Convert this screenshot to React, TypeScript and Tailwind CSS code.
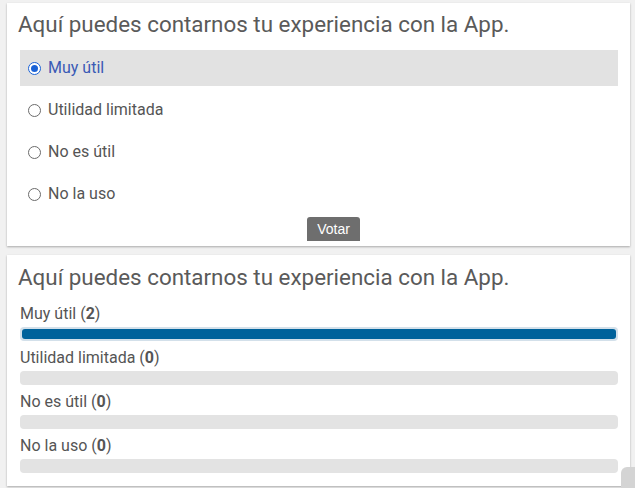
import React from "react";

const options = ["Muy útil", "Utilidad limitada", "No es útil", "No la uso"];
const results = [
  { label: "Muy útil", count: 2 },
  { label: "Utilidad limitada", count: 0 },
  { label: "No es útil", count: 0 },
  { label: "No la uso", count: 0 },
];

const Radio = ({ checked }: { checked: boolean }) =>
  checked ? (
    <span className="flex h-[13px] w-[13px] items-center justify-center rounded-full border-[1.5px] border-[#1a62d6] bg-white">
      <span className="h-[7px] w-[7px] rounded-full bg-[#1a62d6]" />
    </span>
  ) : (
    <span className="h-[13px] w-[13px] rounded-full border border-[#6b6b6b] bg-white" />
  );

const App = () => {
  const total = results.reduce((s, r) => s + r.count, 0);

  return (
    <div
      className="relative min-h-[488px] overflow-hidden bg-[#f1f1f1] pt-[3px]"
      style={{ fontFamily: "Roboto, 'Liberation Sans', sans-serif" }}
    >
      {/* poll form */}
      <div className="ml-[7px] mr-[5px] h-[243px] bg-white shadow-[0_1px_2px_rgba(0,0,0,0.3)]">
        <h2 className="pl-[11px] pt-[6px] text-[22.4px] leading-[30px] text-[#5a5a5a]">
          Aquí puedes contarnos tu experiencia con la App.
        </h2>
        <div className="mt-[11px] flex flex-col gap-[6px] pl-[13px] pr-[12px]">
          {options.map((opt, i) => (
            <label
              key={opt}
              className={`flex h-[36px] items-center pl-[8px] text-[16px] ${
                i === 0 ? "bg-[#e2e2e2] text-[#3a5ab5]" : "text-[#555555]"
              }`}
            >
              <Radio checked={i === 0} />
              <span className="ml-[7px]">{opt}</span>
            </label>
          ))}
        </div>
        <button
          className="ml-[300px] mt-[5px] h-[24px] w-[53px] rounded-t-[3px] bg-[#6e6e6e] text-[14px] text-white"
          style={{ fontFamily: "'Liberation Sans', Arial, sans-serif" }}
        >
          Votar
        </button>
      </div>

      {/* results */}
      <div className="ml-[7px] mr-[5px] mt-[9px] h-[231px] bg-white shadow-[0_1px_2px_rgba(0,0,0,0.3)]">
        <h2 className="pl-[11px] pt-[7px] text-[22.4px] leading-[30px] text-[#5a5a5a]">
          Aquí puedes contarnos tu experiencia con la App.
        </h2>
        <div className="mt-[12px] flex flex-col gap-[7px] pl-[13px] pr-[12px]">
          {results.map((r) => (
            <div key={r.label}>
              <div className="text-[16px] leading-[20px] text-[#555555]">
                {r.label} (<b className="font-bold">{r.count}</b>)
              </div>
              <div
                className={`mt-[3px] h-[14px] rounded-[4px] ${
                  r.count > 0 ? "bg-[#d3e0ea] p-[2px]" : "bg-[#e3e3e3]"
                }`}
              >
                {r.count > 0 && (
                  <div
                    className="h-full rounded-[3px] bg-[#00629b]"
                    style={{ width: `${(r.count / total) * 100}%` }}
                  />
                )}
              </div>
            </div>
          ))}
        </div>
      </div>

      {/* corner widget */}
      <div className="absolute bottom-[-6px] right-0 h-[27px] w-[14px] rounded-tl-[6px] bg-[#d4d4d4]" />
    </div>
  );
};

export default App;
